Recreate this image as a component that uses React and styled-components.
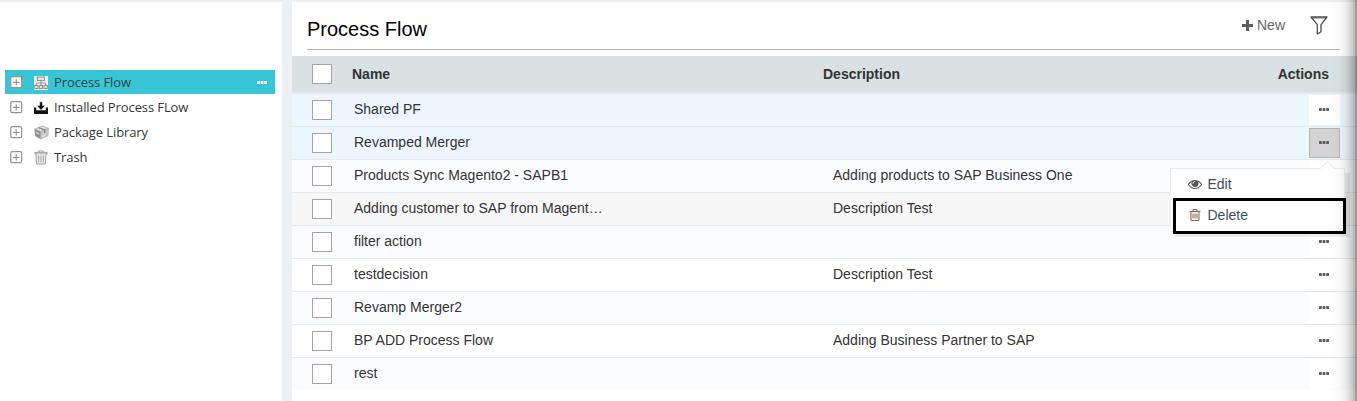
import React from "react";
import styled, { createGlobalStyle } from "styled-components";

const GlobalStyle = createGlobalStyle`
  * { box-sizing: border-box; }
  body { margin: 0; background: #fff; font-family: "Liberation Sans", Arial, sans-serif; overflow: hidden; }
  svg { display: block; flex: none; }
`;

const Page = styled.div`
  position: relative;
  display: flex;
  gap: 10px;
  width: 1357px;
  height: 401px;
  padding-top: 2px;
  background: #ecf0f3;
  overflow: hidden;
`;
const Sidebar = styled.nav`
  width: 282px;
  padding: 68px 7px 0 5px;
  background: #fff;
`;
const TreeItem = styled.div`
  display: flex;
  align-items: center;
  height: ${(p) => (p.$active ? 24 : 25)}px;
  margin-bottom: ${(p) => (p.$active ? 1 : 0)}px;
  padding: 0 8px ${(p) => (p.$active ? 0 : 1)}px 5px;
  background: ${(p) => (p.$active ? "#38c5d5" : "transparent")};
  color: ${(p) => (p.$active ? "#27444c" : "#383838")};
`;
const TreeIcon = styled.span`
  display: flex;
  width: 15px;
  margin: 1px 5px 0 11px;
`;
const TreeLabel = styled.span`
  flex: 1;
  font-family: "Open Sans", "Noto Sans", sans-serif;
  font-size: 13px;
  letter-spacing: -0.1px;
  line-height: 24px;
  white-space: nowrap;
`;
const Main = styled.main`
  flex: 1;
  background: #fff;
`;
const Toolbar = styled.header`
  display: flex;
  align-items: center;
  height: 48px;
  margin: 0 17px 6px 15px;
  padding: 0 12px 1px 0;
  border-bottom: 1px solid #b9b9b9;
`;
const Title = styled.h1`
  flex: 1;
  margin: 7px 0 0;
  font-size: 20px;
  line-height: 24px;
  font-weight: 400;
  color: #000;
`;
const NewButton = styled.div`
  display: flex;
  align-items: center;
  gap: 4px;
  margin-right: 25px;
  font-size: 14px;
  line-height: 16px;
  color: #666;
`;
const TableHead = styled.div`
  display: flex;
  align-items: center;
  height: 38px;
  padding: 0 28px 0 20px;
  background: #d9e1e2;
  border-bottom: 2px solid #e4ebf0;
  font-size: 14px;
  font-weight: 700;
  color: #333;
`;
const HeadCell = styled.div`
  width: ${(p) => (p.$width ? p.$width + "px" : "auto")};
  margin-left: ${(p) => p.$left || "0"};
`;
const Checkbox = styled.span`
  flex: none;
  width: 20px;
  height: 20px;
  border: 1px solid #ada2a3;
  background: #fff;
`;
const Row = styled.div`
  display: flex;
  align-items: center;
  height: ${(p) => (p.$last ? 32 : 33)}px;
  padding: 0 17px 0 20px;
  background: ${(p) => p.$bg};
  border-bottom: ${(p) => (p.$last ? "none" : "1px solid #e4eaef")};
  font-size: 14px;
  line-height: 30px;
  color: #333;
`;
const Cell = styled.div`
  width: ${(p) => p.$width}px;
  height: 32px;
  margin-left: ${(p) => p.$left || 0}px;
  white-space: nowrap;
`;
const ActionButton = styled.div`
  display: flex;
  align-items: center;
  justify-content: center;
  width: 31px;
  height: 30px;
  margin-left: auto;
  padding: 0 1px 1px 0;
  border: 1px solid ${(p) => (p.$open ? "#b4b4b4" : "transparent")};
  background: ${(p) => (p.$open ? "#d4d4d4" : "#fff")};
`;
const Menu = styled.div`
  position: absolute;
  left: 1170px;
  top: 168px;
  width: 175px;
  height: 64px;
  border: 1px solid #e9ebed;
  background: #fff;
  box-shadow: 5px 5px 0 rgba(0, 0, 0, 0.07);
`;
const Caret = styled.svg`
  position: absolute;
  right: 9px;
  top: -8px;
`;
const MenuItem = styled.div`
  display: flex;
  align-items: center;
  height: 31px;
  padding: 0 0 2px 17px;
  font-size: 14px;
  color: #434d5a;
`;
const MenuIcon = styled.span`
  display: flex;
  width: 14px;
  margin: 1px 5.5px 0 0;
`;
const Highlight = styled.div`
  position: absolute;
  left: 1173px;
  top: 198px;
  width: 173px;
  height: 36px;
  border: 3px solid #000;
`;
const EdgeShade = styled.div`
  position: absolute;
  top: 0;
  right: 0;
  bottom: 0;
  width: 27px;
  background: linear-gradient(
    to right,
    rgba(0, 0, 0, 0) 0,
    rgba(0, 0, 0, 0.02) 9px,
    rgba(0, 0, 0, 0.06) 15px,
    rgba(0, 0, 0, 0.15) 20px,
    rgba(0, 0, 0, 0.27) 25px,
    rgba(0, 0, 0, 0.38) 25px,
    rgba(0, 0, 0, 0.4) 27px
  );
`;

const Expander = () => (
  <svg width="13" height="13" viewBox="0 0 13 13" fill="none">
    <rect x=".7" y=".7" width="11" height="11" rx="1.5" fill="#fff" stroke="#929292" strokeWidth="1.2" />
    <path d="M3 6.4h6.4M6.2 3.2v6.4" stroke="#858585" />
  </svg>
);

const FlowIcon = () => (
  <svg width="14" height="14" viewBox="0 0 14 14">
    <rect width="14" height="14" fill="#f4f4f4" />
    <g fill="#e6e6e6" stroke="#868686" strokeWidth=".9">
      <rect x="3.5" y="1" width="7" height="3.6" />
      <path d="M7 4.6v5M2.4 9.5V7h9.2v2.5" fill="none" />
      <rect x=".7" y="9.5" width="3.3" height="3" />
      <rect x="5.3" y="9.5" width="3.3" height="3" />
      <rect x="10" y="9.5" width="3.3" height="3" />
    </g>
  </svg>
);

const InstallIcon = () => (
  <svg width="14" height="14" viewBox="0 0 14 14" fill="#111">
    <path d="M0 6.5h2.2v2.7h9.6V6.5H14V13H0z" />
    <path d="M5.6.8h2.8v3.8h2.9L7 9.2 2.7 4.6h2.9z" stroke="#fff" strokeWidth=".5" />
  </svg>
);

const PackageIcon = () => (
  <svg width="15" height="15" viewBox="0 0 15 15">
    <path d="M.5 4 8.5 1l6 2.3-7.8 3.4z" fill="#e0e0e0" stroke="#999" strokeWidth=".6" />
    <path d="M.5 4 6.7 6.7v7.5L1 11z" fill="#929292" />
    <path d="M6.7 6.7 14.5 3.3 14 10.6l-7.3 3.6z" fill="#cacaca" stroke="#999" strokeWidth=".5" />
    <path d="M3.5 2.9 10 5.2v3l1.5-.7v-3L5.1 2.3z" fill="#888" />
    <path d="m2 7.5 3 1.4M8.5 11.5l3-1.4" stroke="#eee" />
  </svg>
);

const BinIcon = () => (
  <svg width="14" height="15" viewBox="0 0 14 15" fill="none" stroke="#969696" strokeWidth=".9">
    <path d="M4.8 2.3V.9h4.4v1.4" />
    <rect x="1" y="2.3" width="12" height="1.8" fill="#ddd" />
    <path d="M2 4.3 2.6 14h8.8L12 4.3" fill="#eee" />
    <path d="M4.6 5.5v7M7 5.5v7M9.4 5.5v7" />
  </svg>
);

const Dots = ({ color = "#5c5c60" }) => (
  <svg width="10" height="3" viewBox="0 0 10 3" fill={color}>
    <rect width="2.8" height="3" rx=".5" />
    <rect x="3.6" width="2.8" height="3" rx=".5" />
    <rect x="7.2" width="2.8" height="3" rx=".5" />
  </svg>
);

const PlusIcon = () => (
  <svg width="11" height="11" viewBox="0 0 11 11" fill="#5d5d5d">
    <path d="M4 0h3v4h4v3H7v4H4V7H0V4h4z" />
  </svg>
);

const FunnelIcon = () => (
  <svg width="18" height="19" viewBox="0 0 18 19" fill="none" stroke="#4d4d4d" strokeWidth="1.3" strokeLinejoin="round">
    <path d="M1 1h16l-6 7.6v7.2L7.3 18V8.6z" />
    <path d="M1.5 2h15" strokeWidth=".8" />
  </svg>
);

const EyeIcon = () => (
  <svg width="14" height="14" viewBox="0 0 1792 1792" fill="#5b5555">
    <path d="M1664 960q-152-236-381-353 61 104 61 225 0 185-131.5 316.5t-316.5 131.5-316.5-131.5-131.5-316.5q0-121 61-225-229 117-381 353 133 205 333.5 326.5t434.5 121.5 434.5-121.5 333.5-326.5zm-720-384q0-20-14-34t-34-14q-125 0-214.5 89.5t-89.5 214.5q0 20 14 34t34 14 34-14 14-34q0-86 61-147t147-61q20 0 34-14t14-34zm848 384q0 34-20 69-140 230-376.5 368.5t-499.5 138.5-499.5-139-376.5-368q-20-35-20-69t20-69q140-229 376.5-368t499.5-139 499.5 139 376.5 368q20 35 20 69z" />
  </svg>
);

const TrashIcon = () => (
  <svg width="14" height="14" viewBox="0 0 1792 1792" fill="#806348">
    <path d="M704 736v576q0 14-9 23t-23 9h-64q-14 0-23-9t-9-23v-576q0-14 9-23t23-9h64q14 0 23 9t9 23zm256 0v576q0 14-9 23t-23 9h-64q-14 0-23-9t-9-23v-576q0-14 9-23t23-9h64q14 0 23 9t9 23zm256 0v576q0 14-9 23t-23 9h-64q-14 0-23-9t-9-23v-576q0-14 9-23t23-9h64q14 0 23 9t9 23zm128 724v-948h-896v948q0 22 7 40.5t14.5 27 10.5 8.5h832q3 0 10.5-8.5t14.5-27 7-40.5zm-672-1076h448l-48-117q-7-9-17-11h-317q-10 2-17 11zm928 32v64q0 14-9 23t-23 9h-96v948q0 83-47 143.5t-113 60.5h-832q-66 0-113-58.5t-47-141.5v-952h-96q-14 0-23-9t-9-23v-64q0-14 9-23t23-9h309l70-167q15-37 54-63t79-26h320q40 0 79 26t54 63l70 167h309q14 0 23 9t9 23z" />
  </svg>
);

const tree = [
  { label: "Process Flow", Icon: FlowIcon, active: true },
  { label: "Installed Process FLow", Icon: InstallIcon },
  { label: "Package Library", Icon: PackageIcon },
  { label: "Trash", Icon: BinIcon },
];

const rows = [
  { name: "Shared PF", bg: "#eef6fd" },
  { name: "Revamped Merger", bg: "#eef6fd", open: true },
  { name: "Products Sync Magento2 - SAPB1", description: "Adding products to SAP Business One", bg: "#fbfcfe" },
  { name: "Adding customer to SAP from Magent…", description: "Description Test", bg: "#f7f7f7" },
  { name: "filter action", bg: "#fbfcfe" },
  { name: "testdecision", description: "Description Test", bg: "#fff" },
  { name: "Revamp Merger2", bg: "#fbfcfe" },
  { name: "BP ADD Process Flow", description: "Adding Business Partner to SAP", bg: "#fff" },
  { name: "rest", bg: "#fbfcfe" },
];

export default function App() {
  return (
    <>
      <GlobalStyle />
      <Page>
        <Sidebar>
          {tree.map(({ label, Icon, active }) => (
            <TreeItem key={label} $active={active}>
              <Expander />
              <TreeIcon><Icon /></TreeIcon>
              <TreeLabel>{label}</TreeLabel>
              {active && <Dots color="#fff" />}
            </TreeItem>
          ))}
        </Sidebar>
        <Main>
          <Toolbar>
            <Title>Process Flow</Title>
            <NewButton><PlusIcon />New</NewButton>
            <FunnelIcon />
          </Toolbar>
          <TableHead>
            <Checkbox />
            <HeadCell $left="20px" $width={471}>Name</HeadCell>
            <HeadCell>Description</HeadCell>
            <HeadCell $left="auto">Actions</HeadCell>
          </TableHead>
          {rows.map((r, i) => (
            <Row key={r.name} $bg={r.bg} $last={i === rows.length - 1}>
              <Checkbox />
              <Cell $left={22} $width={479}>{r.name}</Cell>
              <Cell $width={300}>{r.description}</Cell>
              <ActionButton $open={r.open}><Dots /></ActionButton>
            </Row>
          ))}
        </Main>
        <Menu>
          <Caret width="15" height="8" viewBox="0 0 15 8">
            <path d="M0 8 7.5.7 15 8z" fill="#fff" />
            <path d="M0 7.5 7.5.7 15 7.5" fill="none" stroke="#e4e6e8" />
          </Caret>
          <MenuItem><MenuIcon><EyeIcon /></MenuIcon>Edit</MenuItem>
          <MenuItem><MenuIcon><TrashIcon /></MenuIcon>Delete</MenuItem>
        </Menu>
        <Highlight />
        <EdgeShade />
      </Page>
    </>
  );
}
